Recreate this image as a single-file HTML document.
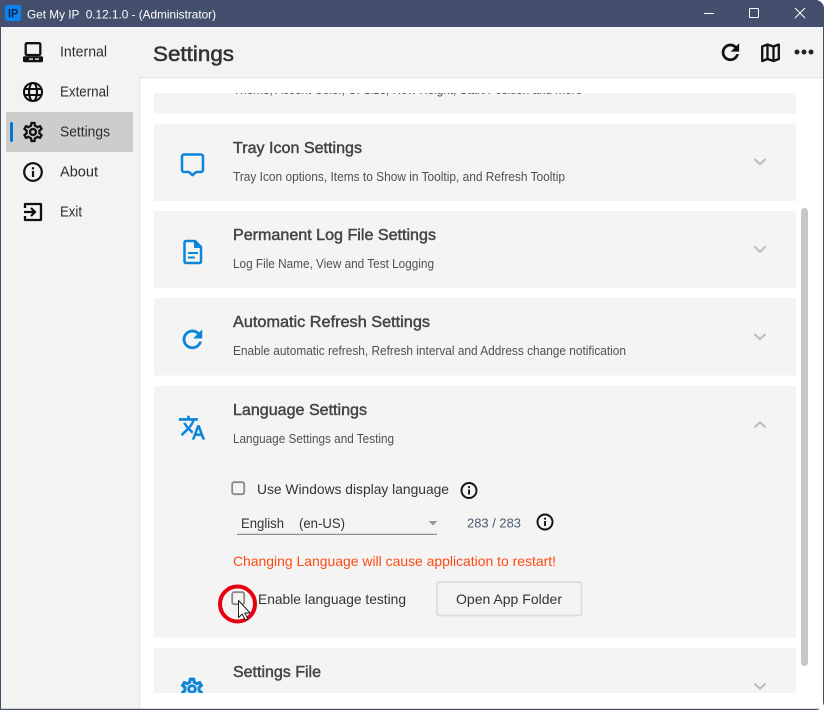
<!DOCTYPE html>
<html><head><meta charset="utf-8"><style>
html,body{margin:0;padding:0;background:#fff;width:824px;height:710px;overflow:hidden}
svg{display:block}
text{font-family:"Liberation Sans",sans-serif;white-space:pre}
.nav{font-size:14.5px;fill:#2e2e2e}
.t{font-size:16px;fill:#444;stroke:#444;stroke-width:.45}
.s{font-size:12.5px;fill:#505050}
.b{font-size:14px;fill:#333}
</style></head><body>
<svg width="824" height="710" viewBox="0 0 824 710" xmlns="http://www.w3.org/2000/svg">
<defs>
<path id="gear" d="M19.43 12.98c.04-.32.07-.64.07-.98 0-.34-.03-.66-.07-.98l2.11-1.65c.19-.15.24-.42.12-.64l-2-3.46c-.09-.16-.26-.25-.44-.25-.06 0-.12.01-.17.03l-2.49 1c-.52-.4-1.08-.73-1.69-.98l-.38-2.65C14.46 2.18 14.25 2 14 2h-4c-.25 0-.46.18-.49.42l-.38 2.65c-.61.25-1.17.59-1.69.98l-2.49-1c-.06-.02-.12-.03-.18-.03-.17 0-.34.09-.43.25l-2 3.46c-.13.22-.07.49.12.64l2.11 1.65c-.04.32-.07.65-.07.98 0 .33.03.66.07.98l-2.11 1.65c-.19.15-.24.42-.12.64l2 3.46c.09.16.26.25.44.25.06 0 .12-.01.17-.03l2.49-1c.52.4 1.08.73 1.69.98l.38 2.65c.03.24.24.42.49.42h4c.25 0 .46-.18.49-.42l.38-2.65c.61-.25 1.17-.59 1.69-.98l2.49 1c.06.02.12.03.18.03.17 0 .34-.09.43-.25l2-3.46c.12-.22.07-.49-.12-.64l-2.11-1.65zm-1.98-1.71c.04.31.05.52.05.73 0 .21-.02.43-.05.73l-.14 1.13.89.7 1.08.84-.7 1.21-1.27-.51-1.04-.42-.9.68c-.43.32-.84.56-1.25.73l-1.06.43-.16 1.13-.2 1.35h-1.4l-.19-1.35-.16-1.13-1.06-.43c-.43-.18-.83-.41-1.23-.71l-.91-.7-1.06.43-1.27.51-.7-1.21 1.08-.84.89-.7-.14-1.13c-.03-.31-.05-.54-.05-.74s.02-.43.05-.73l.14-1.13-.89-.7-1.08-.84.7-1.21 1.27.51 1.04.42.9-.68c.43-.32.84-.56 1.25-.73l1.06-.43.16-1.13.2-1.35h1.39l.19 1.35.16 1.13 1.06.43c.43.18.83.41 1.23.71l.91.7 1.06-.43 1.27-.51.7 1.21-1.07.85-.89.7.14 1.13zM12 8c-2.21 0-4 1.79-4 4s1.79 4 4 4 4-1.79 4-4-1.79-4-4-4zm0 6c-1.1 0-2-.9-2-2s.9-2 2-2 2 .9 2 2-.9 2-2 2z"/>
<path id="refresh" d="M17.65 6.35C16.2 4.9 14.21 4 12 4c-4.42 0-7.99 3.58-7.99 8s3.57 8 7.99 8c3.73 0 6.84-2.55 7.73-6h-2.08c-.82 2.33-3.04 4-5.65 4-3.31 0-6-2.69-6-6s2.69-6 6-6c1.66 0 3.14.69 4.22 1.78L13 11h7V4l-2.35 2.35z"/>
<clipPath id="view"><rect x="140" y="93" width="660" height="600"/></clipPath>
</defs>

<!-- window -->
<rect x="0" y="0" width="824" height="710" fill="#fff"/>
<rect x="0" y="0" width="824" height="27" fill="#444f6d"/>
<rect x="1" y="27" width="822" height="51" fill="#f3f3f3"/>
<rect x="1" y="27" width="138" height="682" fill="#f3f3f3"/>
<rect x="139" y="77" width="684" height="1.3" fill="#e5e5e5"/>
<rect x="139" y="77" width="1.2" height="632" fill="#e5e5e5"/>
<rect x="0" y="27" width="1" height="683" fill="#444f6d"/>
<rect x="823" y="27" width="1" height="683" fill="#444f6d"/>
<rect x="0" y="708.8" width="824" height="1.2" fill="#444f6d"/>
<path d="M816 0h8v8c0-4-4-8-8-8z" fill="#fff"/>
<path d="M824 702v8h-8c4 0 8-4 8-8z" fill="#fff"/>

<!-- title bar -->
<rect x="5" y="5" width="16" height="16" rx="2.500" fill="#0a84f0"/>
<text x="8" y="17.500" font-size="12" font-weight="bold" fill="#10233f" textLength="10" lengthAdjust="spacingAndGlyphs" style="font-size:12px">IP</text>
<text x="27" y="18.500" font-size="12" fill="#fff" textLength="189" lengthAdjust="spacingAndGlyphs">Get My IP  0.12.1.0 - (Administrator)</text>
<rect x="704" y="13" width="10" height="1" fill="#fff"/>
<rect x="749.500" y="8.500" width="9" height="9" rx="1" fill="none" stroke="#fff"/>
<path d="M795 8l10 10M805 8l-10 10" stroke="#fff" stroke-width="1" fill="none"/>

<!-- sidebar -->
<rect x="6" y="112" width="127" height="40" fill="#cdcdcd"/>
<rect x="10" y="122" width="3" height="20" rx="1.500" fill="#0078d4"/>
<text class="nav" x="60" y="56.500" textLength="47" lengthAdjust="spacingAndGlyphs">Internal</text>
<text class="nav" x="60" y="96.500" textLength="49" lengthAdjust="spacingAndGlyphs">External</text>
<text class="nav" x="60" y="136.500" textLength="50" lengthAdjust="spacingAndGlyphs">Settings</text>
<text class="nav" x="60" y="176.500" textLength="38" lengthAdjust="spacingAndGlyphs">About</text>
<text class="nav" x="60" y="216.500" textLength="22" lengthAdjust="spacingAndGlyphs">Exit</text>

<!-- laptop -->
<rect x="25.700" y="43.200" width="14.600" height="11.800" rx="1.200" fill="none" stroke="#111" stroke-width="2.300"/>
<rect x="23" y="56.200" width="20" height="6" rx="1.500" fill="#111"/>
<rect x="29" y="58.400" width="4" height="1.400" fill="#eee"/>
<rect x="35" y="58.400" width="4" height="1.400" fill="#eee"/>
<!-- globe -->
<g fill="none" stroke="#111" stroke-width="2.100">
<circle cx="33" cy="92" r="9"/>
<ellipse cx="33" cy="92" rx="4" ry="9"/>
<path d="M24.500 89h17M24.500 95h17"/>
</g>
<!-- gear -->
<use href="#gear" transform="translate(21 120)" fill="#111" stroke="#111" stroke-width=".3"/>
<!-- about -->
<circle cx="33" cy="172" r="8.800" fill="none" stroke="#111" stroke-width="2.200"/>
<rect x="31.900" y="171" width="2.200" height="6" fill="#111"/>
<rect x="31.900" y="167.200" width="2.200" height="2.200" fill="#111"/>
<!-- exit -->
<path d="M25 208v-4h16v16h-16v-4" fill="none" stroke="#111" stroke-width="2.300" stroke-linejoin="round"/>
<path d="M24 212h11M31 208l4 4-4 4" fill="none" stroke="#111" stroke-width="2.200"/>

<!-- header -->
<text x="153" y="61" font-size="21" fill="#333" stroke="#333" stroke-width=".55" textLength="81" lengthAdjust="spacingAndGlyphs">Settings</text>
<use href="#refresh" transform="translate(717.800 39.800) scale(1.050)" fill="#111" stroke="#111" stroke-width=".6"/>
<g fill="none" stroke="#111" stroke-width="2.300" stroke-linejoin="round">
<path d="M762.200 46.500l5.300-2 6 2 5.300-2v14.500l-5.300 2-6-2-5.300 2z"/>
<path d="M767.500 45v14M773.500 46.500v14"/>
</g>
<circle cx="797" cy="52" r="2.500" fill="#222"/>
<circle cx="804" cy="52" r="2.500" fill="#222"/>
<circle cx="811" cy="52" r="2.500" fill="#222"/>

<!-- cards -->
<g clip-path="url(#view)">
<rect x="154" y="93" width="642" height="20.600" fill="#f4f4f4"/>
<text class="s" x="233" y="94" textLength="349" lengthAdjust="spacingAndGlyphs">Theme, Accent Color, UI Size, Row Height, Start Position and more</text>
<rect x="154" y="123.500" width="642" height="77.500" fill="#f4f4f4"/>
<rect x="154" y="211" width="642" height="77" fill="#f4f4f4"/>
<rect x="154" y="298" width="642" height="77.500" fill="#f4f4f4"/>
<rect x="154" y="386" width="642" height="251.500" fill="#f4f4f4"/>
<rect x="154" y="648" width="642" height="45" fill="#f4f4f4"/>

<text class="t" x="233" y="153" textLength="129" lengthAdjust="spacingAndGlyphs">Tray Icon Settings</text>
<text class="s" x="233" y="181" textLength="332" lengthAdjust="spacingAndGlyphs">Tray Icon options, Items to Show in Tooltip, and Refresh Tooltip</text>
<text class="t" x="233" y="240" textLength="203" lengthAdjust="spacingAndGlyphs">Permanent Log File Settings</text>
<text class="s" x="233" y="268" textLength="201" lengthAdjust="spacingAndGlyphs">Log File Name, View and Test Logging</text>
<text class="t" x="233" y="327" textLength="197" lengthAdjust="spacingAndGlyphs">Automatic Refresh Settings</text>
<text class="s" x="233" y="355" textLength="393" lengthAdjust="spacingAndGlyphs">Enable automatic refresh, Refresh interval and Address change notification</text>
<text class="t" x="233" y="415" textLength="134" lengthAdjust="spacingAndGlyphs">Language Settings</text>
<text class="s" x="233" y="443" textLength="161" lengthAdjust="spacingAndGlyphs">Language Settings and Testing</text>
<text class="t" x="233" y="677" textLength="88" lengthAdjust="spacingAndGlyphs">Settings File</text>

<!-- blue icons -->
<path d="M184 154.500h17a2 2 0 0 1 2 2v13.500a2 2 0 0 1-2 2h-5l-3.500 3.200-3.500-3.200h-5a2 2 0 0 1-2-2v-13.500a2 2 0 0 1 2-2z" fill="none" stroke="#0a85d9" stroke-width="2.500" stroke-linejoin="round"/>
<path d="M186 241h9l6 6v14.500a1.500 1.500 0 0 1-1.500 1.500h-13.500a1.500 1.500 0 0 1-1.500-1.500v-19a1.500 1.500 0 0 1 1.500-1.500z" fill="none" stroke="#0a85d9" stroke-width="2.500" stroke-linejoin="round"/>
<path d="M194 241v7h7z" fill="#0a85d9"/>
<path d="M188 253h10M188 257.500h7" stroke="#0a85d9" stroke-width="2" fill="none"/>
<use href="#refresh" transform="translate(178 325) scale(1.200)" fill="#0a85d9" stroke="#0a85d9" stroke-width=".4"/>
<path transform="translate(177.800 413.500) scale(1.180)" fill="#0a85d9" stroke="#0a85d9" stroke-width=".25" d="M12.870 15.070l-2.540-2.510.03-.03c1.740-1.940 2.980-4.170 3.710-6.530H17V4h-7V2H8v2H1v1.990h11.170C11.500 7.920 10.440 9.750 9 11.350 8.070 10.320 7.300 9.190 6.690 8h-2c.73 1.630 1.730 3.170 2.980 4.560l-5.090 5.020L4 19l5-5 3.110 3.110.76-2.040zM18.500 10h-2L12 22h2l1.120-3h4.750L21 22h2l-4.500-12zm-2.620 7l1.620-4.330L19.120 17h-3.240z"/>
<use href="#gear" transform="translate(178.800 675.800) scale(1.100)" fill="#0a85d9" stroke="#0a85d9" stroke-width=".7"/>

<!-- chevrons -->
<g fill="none" stroke="#bdbdbd" stroke-width="2">
<path d="M754.500 159l5.500 5.200 5.500-5.200"/>
<path d="M754.500 246.500l5.500 5.200 5.500-5.200"/>
<path d="M754.500 334l5.500 5.200 5.500-5.200"/>
<path d="M754.500 427.500l5.500-5.200 5.500 5.200"/>
<path d="M754.500 683.500l5.500 5.200 5.500-5.200"/>
</g>

<!-- language panel -->
<rect x="232.200" y="482.200" width="12" height="12" rx="2" fill="none" stroke="#8a8a8a" stroke-width="1.800"/>
<text class="b" x="257" y="494" textLength="192" lengthAdjust="spacingAndGlyphs">Use Windows display language</text>
<circle cx="469" cy="490.500" r="7.500" fill="none" stroke="#111" stroke-width="1.900"/>
<rect x="468.100" y="489.500" width="1.900" height="5" fill="#111"/>
<rect x="468.100" y="486.200" width="1.900" height="1.900" fill="#111"/>

<text class="b" x="241" y="528" textLength="43" lengthAdjust="spacingAndGlyphs">English</text>
<text class="b" x="299" y="528" textLength="46" lengthAdjust="spacingAndGlyphs">(en-US)</text>
<rect x="237" y="533.800" width="200" height="1" fill="#777"/>
<path d="M428.500 521h9l-4.500 4.500z" fill="#999"/>
<text x="467" y="527.500" font-size="12.500" fill="#4a5c70" textLength="54" lengthAdjust="spacingAndGlyphs">283 / 283</text>
<circle cx="545" cy="522" r="7.500" fill="none" stroke="#111" stroke-width="1.900"/>
<rect x="544.100" y="521" width="1.900" height="5" fill="#111"/>
<rect x="544.100" y="517.700" width="1.900" height="1.900" fill="#111"/>

<text x="233" y="566" font-size="14" fill="#ff4a14" textLength="323" lengthAdjust="spacingAndGlyphs">Changing Language will cause application to restart!</text>

<rect x="232.200" y="592.200" width="12" height="12" rx="2" fill="none" stroke="#8a8a8a" stroke-width="1.800"/>
<text class="b" x="258" y="604" textLength="148" lengthAdjust="spacingAndGlyphs">Enable language testing</text>
<rect x="437" y="582" width="144.500" height="33.500" rx="2" fill="#f3f3f3" stroke="#dcdcdc" stroke-width="1.700"/>
<text class="b" x="456" y="604" textLength="106" lengthAdjust="spacingAndGlyphs">Open App Folder</text>

<circle cx="237.500" cy="604" r="17.500" fill="none" stroke="#e6000f" stroke-width="4"/>
<path d="M238.500 600.500v17l3.800-3.500 3 6 2.500-1.200-3-5.800h5.300z" fill="#fff" stroke="#222" stroke-width="1" stroke-linejoin="round"/>
</g>

<!-- scrollbar -->
<rect x="801" y="208" width="7" height="458" rx="3.500" fill="#c6c6c6"/>
</svg>
</body></html>
